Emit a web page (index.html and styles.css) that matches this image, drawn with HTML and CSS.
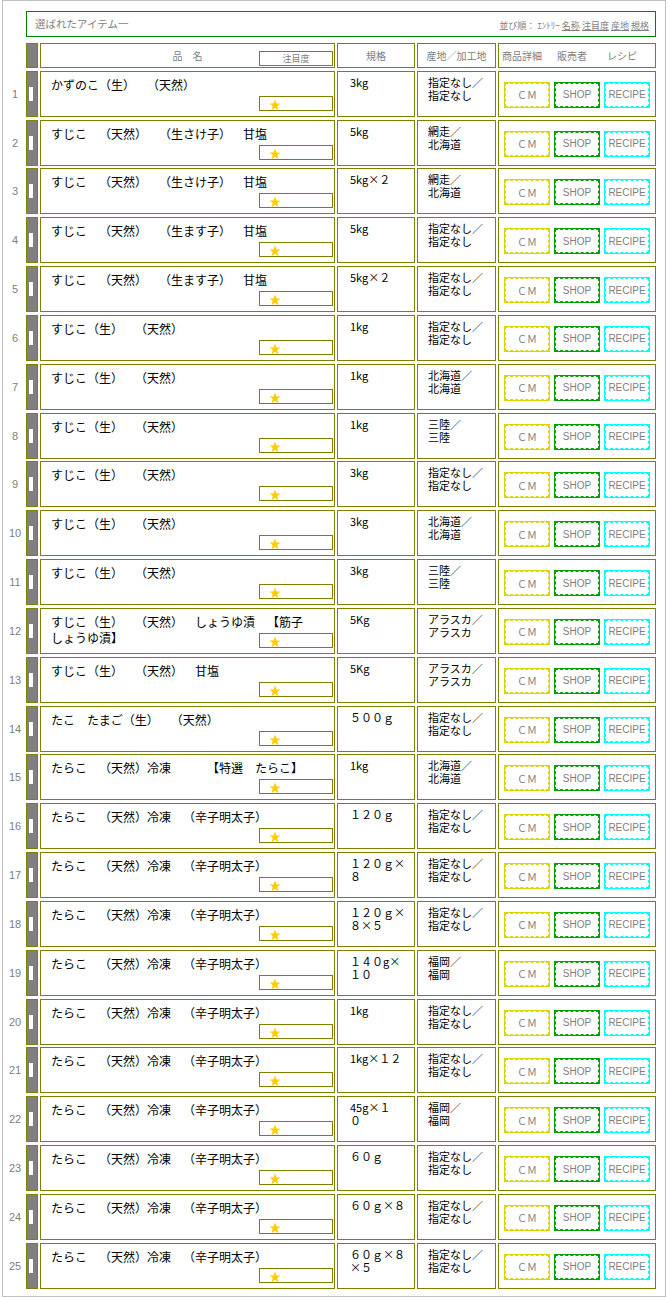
FILE: index.html
```html
<!DOCTYPE html>
<html lang="ja">
<head>
    <meta charset="UTF-8">
    <title>選ばれたアイテム一</title>
    <link rel="stylesheet" href="styles.css">
</head>
<body>
<div class="page">

    <div class="picked">
        <span class="picked-title">選ばれたアイテム一</span>
        <span class="sort">並び順： ｴﾝﾄﾘｰ <a href="#">名称</a> <a href="#">注目度</a> <a href="#">産地</a> <a href="#">規格</a></span>
    </div>

    <div class="list">
        <div class="num"></div>
        <div class="bar head"></div>
        <div class="name head-name"><span class="label">品　名</span><span class="rate rate-head">注目度</span></div>
        <div class="cell head-cell">規格</div>
        <div class="cell head-cell">産地／加工地</div>
        <div class="cell head-btns"><span>商品詳細</span><span>販売者</span><span>レシピ</span></div>

        <div class="num">1</div><div class="bar"><i></i></div>
        <div class="name"><div class="name-text">かずのこ（生）　（天然）</div><div class="rate"><svg viewBox="0 0 24 24"><polygon points="12,1 15,9 23,9 16.5,14 19,22.5 12,17.5 5,22.5 7.5,14 1,9 9,9"/></svg></div></div>
        <div class="spec">3kg</div><div class="origin">指定なし／<br>指定なし</div>
        <div class="btns"><a class="btn cm">ＣＭ</a><a class="btn shop">SHOP</a><a class="btn recipe">RECIPE</a></div>

        <div class="num">2</div><div class="bar"><i></i></div>
        <div class="name"><div class="name-text">すじこ　（天然）　（生さけ子）　甘塩</div><div class="rate"><svg viewBox="0 0 24 24"><polygon points="12,1 15,9 23,9 16.5,14 19,22.5 12,17.5 5,22.5 7.5,14 1,9 9,9"/></svg></div></div>
        <div class="spec">5kg</div><div class="origin">網走／<br>北海道</div>
        <div class="btns"><a class="btn cm">ＣＭ</a><a class="btn shop">SHOP</a><a class="btn recipe">RECIPE</a></div>

        <div class="num">3</div><div class="bar"><i></i></div>
        <div class="name"><div class="name-text">すじこ　（天然）　（生さけ子）　甘塩</div><div class="rate"><svg viewBox="0 0 24 24"><polygon points="12,1 15,9 23,9 16.5,14 19,22.5 12,17.5 5,22.5 7.5,14 1,9 9,9"/></svg></div></div>
        <div class="spec">5kg×２</div><div class="origin">網走／<br>北海道</div>
        <div class="btns"><a class="btn cm">ＣＭ</a><a class="btn shop">SHOP</a><a class="btn recipe">RECIPE</a></div>

        <div class="num">4</div><div class="bar"><i></i></div>
        <div class="name"><div class="name-text">すじこ　（天然）　（生ます子）　甘塩</div><div class="rate"><svg viewBox="0 0 24 24"><polygon points="12,1 15,9 23,9 16.5,14 19,22.5 12,17.5 5,22.5 7.5,14 1,9 9,9"/></svg></div></div>
        <div class="spec">5kg</div><div class="origin">指定なし／<br>指定なし</div>
        <div class="btns"><a class="btn cm">ＣＭ</a><a class="btn shop">SHOP</a><a class="btn recipe">RECIPE</a></div>

        <div class="num">5</div><div class="bar"><i></i></div>
        <div class="name"><div class="name-text">すじこ　（天然）　（生ます子）　甘塩</div><div class="rate"><svg viewBox="0 0 24 24"><polygon points="12,1 15,9 23,9 16.5,14 19,22.5 12,17.5 5,22.5 7.5,14 1,9 9,9"/></svg></div></div>
        <div class="spec">5kg×２</div><div class="origin">指定なし／<br>指定なし</div>
        <div class="btns"><a class="btn cm">ＣＭ</a><a class="btn shop">SHOP</a><a class="btn recipe">RECIPE</a></div>

        <div class="num">6</div><div class="bar"><i></i></div>
        <div class="name"><div class="name-text">すじこ（生）　（天然）</div><div class="rate"><svg viewBox="0 0 24 24"><polygon points="12,1 15,9 23,9 16.5,14 19,22.5 12,17.5 5,22.5 7.5,14 1,9 9,9"/></svg></div></div>
        <div class="spec">1kg</div><div class="origin">指定なし／<br>指定なし</div>
        <div class="btns"><a class="btn cm">ＣＭ</a><a class="btn shop">SHOP</a><a class="btn recipe">RECIPE</a></div>

        <div class="num">7</div><div class="bar"><i></i></div>
        <div class="name"><div class="name-text">すじこ（生）　（天然）</div><div class="rate"><svg viewBox="0 0 24 24"><polygon points="12,1 15,9 23,9 16.5,14 19,22.5 12,17.5 5,22.5 7.5,14 1,9 9,9"/></svg></div></div>
        <div class="spec">1kg</div><div class="origin">北海道／<br>北海道</div>
        <div class="btns"><a class="btn cm">ＣＭ</a><a class="btn shop">SHOP</a><a class="btn recipe">RECIPE</a></div>

        <div class="num">8</div><div class="bar"><i></i></div>
        <div class="name"><div class="name-text">すじこ（生）　（天然）</div><div class="rate"><svg viewBox="0 0 24 24"><polygon points="12,1 15,9 23,9 16.5,14 19,22.5 12,17.5 5,22.5 7.5,14 1,9 9,9"/></svg></div></div>
        <div class="spec">1kg</div><div class="origin">三陸／<br>三陸</div>
        <div class="btns"><a class="btn cm">ＣＭ</a><a class="btn shop">SHOP</a><a class="btn recipe">RECIPE</a></div>

        <div class="num">9</div><div class="bar"><i></i></div>
        <div class="name"><div class="name-text">すじこ（生）　（天然）</div><div class="rate"><svg viewBox="0 0 24 24"><polygon points="12,1 15,9 23,9 16.5,14 19,22.5 12,17.5 5,22.5 7.5,14 1,9 9,9"/></svg></div></div>
        <div class="spec">3kg</div><div class="origin">指定なし／<br>指定なし</div>
        <div class="btns"><a class="btn cm">ＣＭ</a><a class="btn shop">SHOP</a><a class="btn recipe">RECIPE</a></div>

        <div class="num">10</div><div class="bar"><i></i></div>
        <div class="name"><div class="name-text">すじこ（生）　（天然）</div><div class="rate"><svg viewBox="0 0 24 24"><polygon points="12,1 15,9 23,9 16.5,14 19,22.5 12,17.5 5,22.5 7.5,14 1,9 9,9"/></svg></div></div>
        <div class="spec">3kg</div><div class="origin">北海道／<br>北海道</div>
        <div class="btns"><a class="btn cm">ＣＭ</a><a class="btn shop">SHOP</a><a class="btn recipe">RECIPE</a></div>

        <div class="num">11</div><div class="bar"><i></i></div>
        <div class="name"><div class="name-text">すじこ（生）　（天然）</div><div class="rate"><svg viewBox="0 0 24 24"><polygon points="12,1 15,9 23,9 16.5,14 19,22.5 12,17.5 5,22.5 7.5,14 1,9 9,9"/></svg></div></div>
        <div class="spec">3kg</div><div class="origin">三陸／<br>三陸</div>
        <div class="btns"><a class="btn cm">ＣＭ</a><a class="btn shop">SHOP</a><a class="btn recipe">RECIPE</a></div>

        <div class="num">12</div><div class="bar"><i></i></div>
        <div class="name"><div class="name-text">すじこ（生）　（天然）　しょうゆ漬　【筋子しょうゆ漬】</div><div class="rate"><svg viewBox="0 0 24 24"><polygon points="12,1 15,9 23,9 16.5,14 19,22.5 12,17.5 5,22.5 7.5,14 1,9 9,9"/></svg></div></div>
        <div class="spec">5Kg</div><div class="origin">アラスカ／<br>アラスカ</div>
        <div class="btns"><a class="btn cm">ＣＭ</a><a class="btn shop">SHOP</a><a class="btn recipe">RECIPE</a></div>

        <div class="num">13</div><div class="bar"><i></i></div>
        <div class="name"><div class="name-text">すじこ（生）　（天然）　甘塩</div><div class="rate"><svg viewBox="0 0 24 24"><polygon points="12,1 15,9 23,9 16.5,14 19,22.5 12,17.5 5,22.5 7.5,14 1,9 9,9"/></svg></div></div>
        <div class="spec">5Kg</div><div class="origin">アラスカ／<br>アラスカ</div>
        <div class="btns"><a class="btn cm">ＣＭ</a><a class="btn shop">SHOP</a><a class="btn recipe">RECIPE</a></div>

        <div class="num">14</div><div class="bar"><i></i></div>
        <div class="name"><div class="name-text">たこ　たまご（生）　（天然）</div><div class="rate"><svg viewBox="0 0 24 24"><polygon points="12,1 15,9 23,9 16.5,14 19,22.5 12,17.5 5,22.5 7.5,14 1,9 9,9"/></svg></div></div>
        <div class="spec">５００ｇ</div><div class="origin">指定なし／<br>指定なし</div>
        <div class="btns"><a class="btn cm">ＣＭ</a><a class="btn shop">SHOP</a><a class="btn recipe">RECIPE</a></div>

        <div class="num">15</div><div class="bar"><i></i></div>
        <div class="name"><div class="name-text">たらこ　（天然）冷凍　　　【特選　たらこ】</div><div class="rate"><svg viewBox="0 0 24 24"><polygon points="12,1 15,9 23,9 16.5,14 19,22.5 12,17.5 5,22.5 7.5,14 1,9 9,9"/></svg></div></div>
        <div class="spec">1kg</div><div class="origin">北海道／<br>北海道</div>
        <div class="btns"><a class="btn cm">ＣＭ</a><a class="btn shop">SHOP</a><a class="btn recipe">RECIPE</a></div>

        <div class="num">16</div><div class="bar"><i></i></div>
        <div class="name"><div class="name-text">たらこ　（天然）冷凍　（辛子明太子）</div><div class="rate"><svg viewBox="0 0 24 24"><polygon points="12,1 15,9 23,9 16.5,14 19,22.5 12,17.5 5,22.5 7.5,14 1,9 9,9"/></svg></div></div>
        <div class="spec">１２０ｇ</div><div class="origin">指定なし／<br>指定なし</div>
        <div class="btns"><a class="btn cm">ＣＭ</a><a class="btn shop">SHOP</a><a class="btn recipe">RECIPE</a></div>

        <div class="num">17</div><div class="bar"><i></i></div>
        <div class="name"><div class="name-text">たらこ　（天然）冷凍　（辛子明太子）</div><div class="rate"><svg viewBox="0 0 24 24"><polygon points="12,1 15,9 23,9 16.5,14 19,22.5 12,17.5 5,22.5 7.5,14 1,9 9,9"/></svg></div></div>
        <div class="spec">１２０ｇ×<br>８</div><div class="origin">指定なし／<br>指定なし</div>
        <div class="btns"><a class="btn cm">ＣＭ</a><a class="btn shop">SHOP</a><a class="btn recipe">RECIPE</a></div>

        <div class="num">18</div><div class="bar"><i></i></div>
        <div class="name"><div class="name-text">たらこ　（天然）冷凍　（辛子明太子）</div><div class="rate"><svg viewBox="0 0 24 24"><polygon points="12,1 15,9 23,9 16.5,14 19,22.5 12,17.5 5,22.5 7.5,14 1,9 9,9"/></svg></div></div>
        <div class="spec">１２０ｇ×<br>８×５</div><div class="origin">指定なし／<br>指定なし</div>
        <div class="btns"><a class="btn cm">ＣＭ</a><a class="btn shop">SHOP</a><a class="btn recipe">RECIPE</a></div>

        <div class="num">19</div><div class="bar"><i></i></div>
        <div class="name"><div class="name-text">たらこ　（天然）冷凍　（辛子明太子）</div><div class="rate"><svg viewBox="0 0 24 24"><polygon points="12,1 15,9 23,9 16.5,14 19,22.5 12,17.5 5,22.5 7.5,14 1,9 9,9"/></svg></div></div>
        <div class="spec">１４０g×<br>１０</div><div class="origin">福岡／<br>福岡</div>
        <div class="btns"><a class="btn cm">ＣＭ</a><a class="btn shop">SHOP</a><a class="btn recipe">RECIPE</a></div>

        <div class="num">20</div><div class="bar"><i></i></div>
        <div class="name"><div class="name-text">たらこ　（天然）冷凍　（辛子明太子）</div><div class="rate"><svg viewBox="0 0 24 24"><polygon points="12,1 15,9 23,9 16.5,14 19,22.5 12,17.5 5,22.5 7.5,14 1,9 9,9"/></svg></div></div>
        <div class="spec">1kg</div><div class="origin">指定なし／<br>指定なし</div>
        <div class="btns"><a class="btn cm">ＣＭ</a><a class="btn shop">SHOP</a><a class="btn recipe">RECIPE</a></div>

        <div class="num">21</div><div class="bar"><i></i></div>
        <div class="name"><div class="name-text">たらこ　（天然）冷凍　（辛子明太子）</div><div class="rate"><svg viewBox="0 0 24 24"><polygon points="12,1 15,9 23,9 16.5,14 19,22.5 12,17.5 5,22.5 7.5,14 1,9 9,9"/></svg></div></div>
        <div class="spec">1kg×１２</div><div class="origin">指定なし／<br>指定なし</div>
        <div class="btns"><a class="btn cm">ＣＭ</a><a class="btn shop">SHOP</a><a class="btn recipe">RECIPE</a></div>

        <div class="num">22</div><div class="bar"><i></i></div>
        <div class="name"><div class="name-text">たらこ　（天然）冷凍　（辛子明太子）</div><div class="rate"><svg viewBox="0 0 24 24"><polygon points="12,1 15,9 23,9 16.5,14 19,22.5 12,17.5 5,22.5 7.5,14 1,9 9,9"/></svg></div></div>
        <div class="spec">45g×１<br>０</div><div class="origin">福岡／<br>福岡</div>
        <div class="btns"><a class="btn cm">ＣＭ</a><a class="btn shop">SHOP</a><a class="btn recipe">RECIPE</a></div>

        <div class="num">23</div><div class="bar"><i></i></div>
        <div class="name"><div class="name-text">たらこ　（天然）冷凍　（辛子明太子）</div><div class="rate"><svg viewBox="0 0 24 24"><polygon points="12,1 15,9 23,9 16.5,14 19,22.5 12,17.5 5,22.5 7.5,14 1,9 9,9"/></svg></div></div>
        <div class="spec">６０ｇ</div><div class="origin">指定なし／<br>指定なし</div>
        <div class="btns"><a class="btn cm">ＣＭ</a><a class="btn shop">SHOP</a><a class="btn recipe">RECIPE</a></div>

        <div class="num">24</div><div class="bar"><i></i></div>
        <div class="name"><div class="name-text">たらこ　（天然）冷凍　（辛子明太子）</div><div class="rate"><svg viewBox="0 0 24 24"><polygon points="12,1 15,9 23,9 16.5,14 19,22.5 12,17.5 5,22.5 7.5,14 1,9 9,9"/></svg></div></div>
        <div class="spec">６０ｇ×８</div><div class="origin">指定なし／<br>指定なし</div>
        <div class="btns"><a class="btn cm">ＣＭ</a><a class="btn shop">SHOP</a><a class="btn recipe">RECIPE</a></div>

        <div class="num">25</div><div class="bar"><i></i></div>
        <div class="name"><div class="name-text">たらこ　（天然）冷凍　（辛子明太子）</div><div class="rate"><svg viewBox="0 0 24 24"><polygon points="12,1 15,9 23,9 16.5,14 19,22.5 12,17.5 5,22.5 7.5,14 1,9 9,9"/></svg></div></div>
        <div class="spec">６０ｇ×８<br>×５</div><div class="origin">指定なし／<br>指定なし</div>
        <div class="btns"><a class="btn cm">ＣＭ</a><a class="btn shop">SHOP</a><a class="btn recipe">RECIPE</a></div>
    </div>

</div>
</body>
</html>
```

FILE: styles.css
```css
body {
    margin: 0;
    font-family: "Noto Sans CJK JP", sans-serif;
    color: #000;
    background: #fff;
    text-spacing-trim: space-all;
}
.page {
    box-sizing: border-box;
    width: 664px;
    height: 1297px;
    margin-left: 2px;
    padding: 10px 0 0 3px;
    border: 1px solid #c0c0c0;
}
.picked {
    box-sizing: border-box;
    width: 630px;
    height: 26px;
    margin: 0 0 6px 20px;
    padding: 0 6px 0 8px;
    border: 1px solid #008000;
    display: flex;
    justify-content: space-between;
    align-items: center;
    color: #808080;
}
.picked-title {
    font-size: 10.5px;
    line-height: 12px;
}
.sort {
    font-size: 9px;
    line-height: 10px;
    margin-top: 4px;
}
.sort a {
    color: #808080;
}
.list {
    display: grid;
    grid-template-columns: 18px 12px 295px 78px 79px 158px;
    grid-template-rows: 25px;
    grid-auto-rows: 46px;
    column-gap: 2px;
    row-gap: 2.83px;
}
.num {
    display: flex;
    align-items: center;
    justify-content: center;
    font-family: "Liberation Sans", sans-serif;
    font-size: 11px;
    color: #808080;
}
.bar {
    box-sizing: border-box;
    background: #808080;
    border: 1px solid #808000;
    display: flex;
    align-items: center;
    justify-content: center;
    padding-right: 2px;
}
.bar i {
    width: 4px;
    height: 14px;
    background: #fff;
}
.name, .cell, .spec, .origin, .btns {
    box-sizing: border-box;
    border: 1px solid #808000;
}
.name {
    display: grid;
    padding: 5px 1px 5px 10px;
}
.name-text {
    grid-area: 1 / 1;
    width: 258px;
    font-size: 12px;
    line-height: 16px;
}
.rate {
    grid-area: 1 / 1;
    justify-self: end;
    align-self: end;
    box-sizing: border-box;
    width: 74px;
    height: 15px;
    border: 1px solid #808000;
    padding-left: 9px;
}
.rate svg {
    display: block;
    width: 12px;
    height: 12px;
    margin-top: 2px;
    fill: #ffcc00;
}
.head-name {
    padding: 0 1px 1px 1px;
}
.head-name .label {
    grid-area: 1 / 1;
    justify-self: center;
    align-self: center;
    font-size: 10px;
    color: #808080;
}
.rate-head {
    font-size: 9px;
    line-height: 13px;
    color: #808080;
    text-align: center;
    padding: 0;
}
.head-cell {
    display: flex;
    align-items: center;
    justify-content: center;
    font-size: 10px;
    color: #808080;
}
.head-btns {
    display: flex;
    align-items: center;
    gap: 4px;
    font-size: 10px;
    color: #808080;
}
.head-btns span {
    width: 46px;
    text-align: center;
}
.spec, .origin {
    padding-top: 4px;
    font-size: 11px;
    line-height: 13px;
}
.spec {
    padding-left: 12px;
}
.origin {
    padding-left: 10px;
}
.btns {
    display: flex;
    align-items: center;
    gap: 4px;
    padding: 2px 0 0 5px;
}
.btn {
    box-sizing: border-box;
    width: 46px;
    height: 26px;
    display: flex;
    align-items: center;
    justify-content: center;
    border: 1px solid;
    outline: 1px dashed;
    outline-offset: -2px;
    color: #808080;
    font-family: "Liberation Sans", sans-serif;
    font-size: 10px;
    cursor: pointer;
}
.btn.cm {
    border-color: #d8d800;
    outline-color: #d8d800;
    font-family: "Noto Sans CJK JP", sans-serif;
}
.btn.shop {
    border-color: #00a000;
    outline-color: #00a000;
}
.btn.recipe {
    border-color: #00ffff;
    outline-color: #00ffff;
}
```
